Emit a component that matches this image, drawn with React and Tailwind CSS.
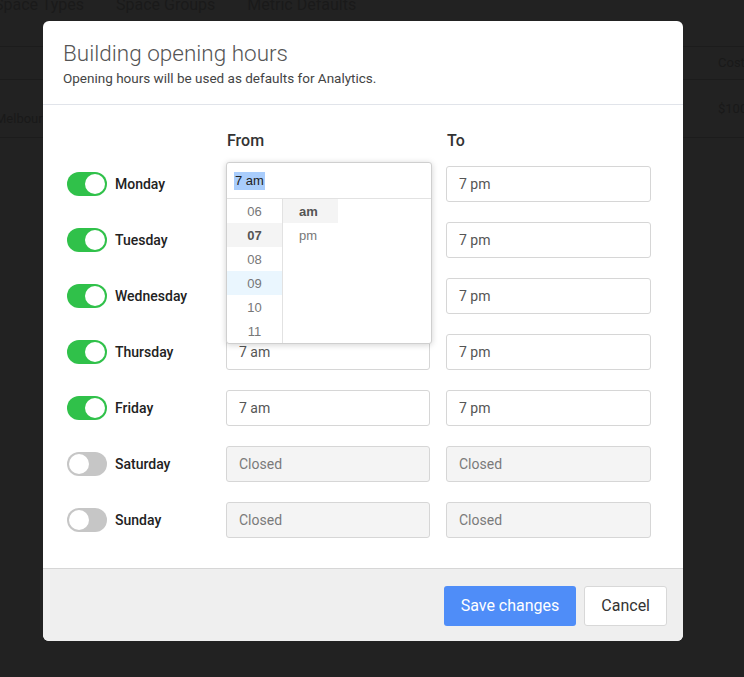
import { useState } from "react";

const DAYS = [
  { name: "Monday", open: true },
  { name: "Tuesday", open: true },
  { name: "Wednesday", open: true },
  { name: "Thursday", open: true },
  { name: "Friday", open: true },
  { name: "Saturday", open: false },
  { name: "Sunday", open: false },
];

const font = { fontFamily: "Roboto, 'Noto Sans', sans-serif" };

const Toggle = ({ on }) => (
  <div
    className={`w-10 h-6 rounded-full p-[2px] flex ${
      on ? "bg-[#30c14a] justify-end" : "bg-[#c6c6c6] justify-start"
    }`}
  >
    <div className="w-5 h-5 rounded-full bg-white" />
  </div>
);

const TimeInput = ({ value, closed }) => (
  <div
    className={`h-9 rounded-[3px] border border-[#d6d6d6] flex items-center px-3 text-[14px] ${
      closed ? "bg-[#f4f4f4] text-[#7a7a7a]" : "bg-white text-[#555]"
    }`}
  >
    {value}
  </div>
);

const Picker = () => {
  const hours = ["06", "07", "08", "09", "10", "11"];
  return (
    <div
      className="absolute left-0 -top-1 w-[206px] bg-white border border-[#cfcfcf] rounded-[3px] shadow-[0_1px_6px_rgba(0,0,0,0.18)] z-10"
      style={{ fontFamily: "'Liberation Sans', Arial, sans-serif" }}
    >
      <div className="h-9 flex items-center px-[7px] border-b border-[#e2e2e2]">
        <span className="bg-[#a9cdfc] text-[#222] text-[13px] px-[1px] leading-[18px]">7 am</span>
      </div>
      <div className="flex h-[144px]">
        <div className="w-14 border-r border-[#e2e2e2] flex flex-col">
          {hours.map((h) => (
            <div
              key={h}
              className={`h-6 flex items-center justify-center text-[13px] ${
                h === "07"
                  ? "bg-[#f4f4f4] font-bold text-[#555]"
                  : h === "09"
                  ? "bg-[#eaf6fe] text-[#777]"
                  : "text-[#777]"
              }`}
            >
              {h}
            </div>
          ))}
        </div>
        <div className="flex flex-col">
          <div className="h-6 w-[55px] flex items-center pl-4 bg-[#f4f4f4] text-[13px] font-bold text-[#555]">am</div>
          <div className="h-6 w-[55px] flex items-center pl-4 text-[13px] text-[#777]">pm</div>
        </div>
      </div>
    </div>
  );
};

export default function App() {
  const [days] = useState(DAYS);

  return (
    <div className="relative w-full h-[677px] bg-[#222] overflow-hidden" style={font}>
      {/* page behind the overlay */}
      <div className="flex gap-8 -mt-[7px] -ml-[6px] text-[16px] text-[#1a1a1a]">
        <span>Space Types</span>
        <span>Space Groups</span>
        <span>Metric Defaults</span>
      </div>
      <div className="mt-[29px] border-t border-[#1c1c1c]">
        <div className="h-[33px] border-b border-[#1c1c1c] flex items-center justify-end text-[13px] text-[#191919]">
          <span className="w-[26px] overflow-hidden">Cost</span>
        </div>
        <div className="h-[58px] border-b border-[#1c1c1c] flex items-center justify-between text-[13px] text-[#191919]">
          <span className="-ml-[5px] mt-5">Melbourne</span>
          <span className="w-[26px] overflow-hidden">$1000</span>
        </div>
      </div>

      {/* modal */}
      <div className="absolute left-[43px] top-[21px] w-[640px] bg-white rounded-md overflow-hidden">
        <div className="px-5 pt-[18px] pb-[16px] border-b border-[#e1e4ea]">
          <h1 className="text-[22.5px] font-light text-[#555] leading-7">Building opening hours</h1>
          <p className="text-[13.5px] text-[#444] mt-[1px]">Opening hours will be used as defaults for Analytics.</p>
        </div>
        <div className="pl-6 pr-8 pt-[24px] pb-[30px]">
          <div className="grid grid-cols-[143px_204px_205px] gap-x-4 items-center">
            <div />
            <div className="text-[16px] font-medium text-[#333] pl-[1px]">From</div>
            <div className="text-[16px] font-medium text-[#333] pl-[1px]">To</div>
          </div>
          <div className="mt-[13px] flex flex-col gap-5">
            {days.map((d, i) => (
              <div key={d.name} className="grid grid-cols-[143px_204px_205px] gap-x-4 items-center">
                <div className="flex items-center gap-2">
                  <Toggle on={d.open} />
                  <span className="text-[14px] font-medium text-[#222]">{d.name}</span>
                </div>
                <div className="relative">
                  <TimeInput value={d.open ? "7 am" : "Closed"} closed={!d.open} />
                  {i === 0 && <Picker />}
                </div>
                <TimeInput value={d.open ? "7 pm" : "Closed"} closed={!d.open} />
              </div>
            ))}
          </div>
        </div>
        <div className="bg-[#efefef] border-t border-[#d6d6d6] h-[73px] flex items-center justify-end gap-2 pr-4 pt-[1px]">
          <button className="h-10 px-[17px] rounded-[3px] bg-[#4f8df8] text-white text-[16px]">Save changes</button>
          <button className="h-10 px-4 rounded-[3px] bg-white border border-[#d8d8d8] text-[#333] text-[16px]">Cancel</button>
        </div>
      </div>
    </div>
  );
}
